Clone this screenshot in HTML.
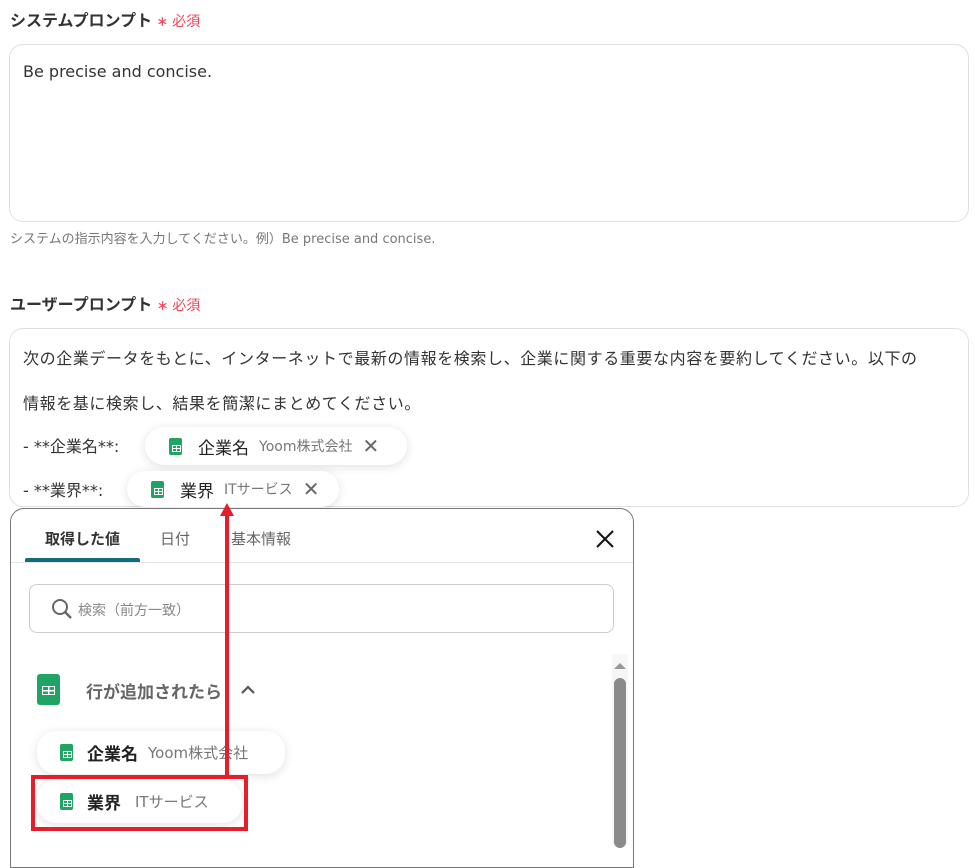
<!DOCTYPE html>
<html><head><meta charset="utf-8">
<style>
*{box-sizing:border-box;margin:0;padding:0}
body{width:975px;height:837px;overflow:hidden;background:#fff;font-family:"DejaVu Sans","Noto Sans CJK JP",sans-serif;color:#333;position:relative}
.abs{position:absolute;white-space:nowrap}
.lbl{font-size:16px;font-weight:bold;color:#333;font-family:"Liberation Sans","Noto Sans CJK JP",sans-serif}
.req{color:#f0445a;font-size:14px;font-weight:normal}
.box{position:absolute;left:9px;width:960px;border:1px solid #e0e0e0;border-radius:14px;background:#fff}
.t16{font-size:16px;color:#333}
.chip{position:absolute;height:38px;border-radius:19px;background:#fff;box-shadow:0 2px 10px rgba(0,0,0,.12);display:flex;align-items:center;white-space:nowrap}
.sh{display:inline-block;width:13px;height:17px;background:#1fa463;border-radius:2px;position:relative;flex:none}
.sh:after{content:"";position:absolute;left:3px;top:7px;width:7px;height:5px;border:1px solid #fff;background:linear-gradient(#fff,#fff) center/1px 100% no-repeat,linear-gradient(#fff,#fff) center/100% 1px no-repeat}
.main{font-size:17px;color:#222;margin-left:16px}
.sub{font-size:14px;color:#777;margin-left:10px}
.x{font-size:20px;color:#666;margin-left:10px}
</style></head><body>
<div class="abs lbl" style="left:10px;top:7px">システムプロンプト <span class="req">∗ 必須</span></div>
<div class="box" style="top:44px;height:178px"></div>
<div class="abs t16" style="left:23px;top:62px">Be precise and concise.</div>
<div class="abs" style="left:10px;top:228px;font-size:13px;color:#777">システムの指示内容を入力してください。例）Be precise and concise.</div>

<div class="abs lbl" style="left:10px;top:291px">ユーザープロンプト <span class="req">∗ 必須</span></div>
<div class="box" style="top:328px;height:179px"></div>
<div class="abs t16" style="left:23px;top:345px;letter-spacing:0.6px">次の企業データをもとに、インターネットで最新の情報を検索し、企業に関する重要な内容を要約してください。以下の</div>
<div class="abs t16" style="left:23px;top:390px;letter-spacing:0.6px">情報を基に検索し、結果を簡潔にまとめてください。</div>
<div class="abs t16" style="left:23px;top:433px">- **企業名**:</div>
<div class="abs t16" style="left:23px;top:477px">- **業界**:</div>
<div class="chip" style="left:145px;top:427px;width:262px;padding-left:24px"><span class="sh"></span><span class="main">企業名</span><span class="sub">Yoom株式会社</span><span class="x">✕</span></div>
<div class="chip" style="left:127px;top:471px;width:212px;padding-left:24px;height:36px"><span class="sh"></span><span class="main">業界</span><span class="sub">ITサービス</span><span class="x">✕</span></div>

<div style="position:absolute;left:10px;top:508px;width:624px;height:360px;border:1px solid #777;border-radius:14px 14px 0 0;background:#fff"></div>
<div class="abs" style="left:45px;top:528px;font-size:15px;font-weight:bold;color:#333">取得した値</div>
<div class="abs" style="left:160px;top:528px;font-size:15px;color:#666">日付</div>
<div class="abs" style="left:231px;top:528px;font-size:15px;color:#666">基本情報</div>
<div style="position:absolute;left:25px;top:558px;width:115px;height:4px;background:#176a7c;border-radius:2px 2px 0 0"></div>
<div style="position:absolute;left:11px;top:562px;width:622px;height:1px;background:#e3e3e3"></div>
<svg style="position:absolute;left:595px;top:529px" width="20" height="20" viewBox="0 0 20 20"><path d="M2 2L18 18M18 2L2 18" stroke="#111" stroke-width="2"/></svg>
<div style="position:absolute;left:29px;top:584px;width:585px;height:49px;border:1px solid #ccc;border-radius:8px"></div>
<svg style="position:absolute;left:51px;top:598px" width="22" height="22" viewBox="0 0 22 22"><circle cx="9" cy="9" r="7" fill="none" stroke="#666" stroke-width="2"/><path d="M14 14L20 20" stroke="#666" stroke-width="2.4"/></svg>
<div class="abs" style="left:78px;top:600px;font-size:14px;color:#888">検索（前方一致）</div>
<div style="position:absolute;left:612px;top:654px;width:16px;height:190px;background:#f6f6f6"></div>
<svg style="position:absolute;left:613px;top:660px" width="14" height="10"><path d="M1 9L7 3L13 9Z" fill="#999"/></svg>
<div style="position:absolute;left:614px;top:678px;width:12px;height:170px;background:#8a8a8a;border-radius:6px"></div>
<div style="position:absolute;left:37px;top:674px;width:23px;height:31px;background:#1fa463;border-radius:3px"></div>
<div style="position:absolute;left:42px;top:686px;width:13px;height:9px;border:1.5px solid #fff;background:linear-gradient(#fff,#fff) center/1.5px 100% no-repeat,linear-gradient(#fff,#fff) center/100% 1.5px no-repeat"></div>
<div class="abs" style="left:86px;top:678px;font-size:17px;font-weight:bold;color:#666">行が追加されたら</div>
<svg style="position:absolute;left:240px;top:684px" width="16" height="12"><path d="M2 9L8 3L14 9" fill="none" stroke="#555" stroke-width="2.2"/></svg>
<div class="chip" style="left:37px;top:731px;width:248px;height:43px;padding-left:23px"><span class="sh"></span><span class="main" style="font-weight:bold;margin-left:14px">企業名</span><span class="sub" style="font-size:15px">Yoom株式会社</span></div>
<div class="chip" style="left:37px;top:780px;width:205px;height:43px;padding-left:23px"><span class="sh"></span><span class="main" style="font-weight:bold;margin-left:14px">業界</span><span class="sub" style="margin-left:14px;font-size:15px">ITサービス</span></div>
<div style="position:absolute;left:31px;top:775px;width:217px;height:56px;border:4px solid #e61e2a"></div>
<div style="position:absolute;left:225px;top:512px;width:4px;height:266px;background:#e61e2a"></div>
<svg style="position:absolute;left:219px;top:503px" width="16" height="14"><path d="M8 0L15 13H1Z" fill="#e61e2a"/></svg>
</body></html>
